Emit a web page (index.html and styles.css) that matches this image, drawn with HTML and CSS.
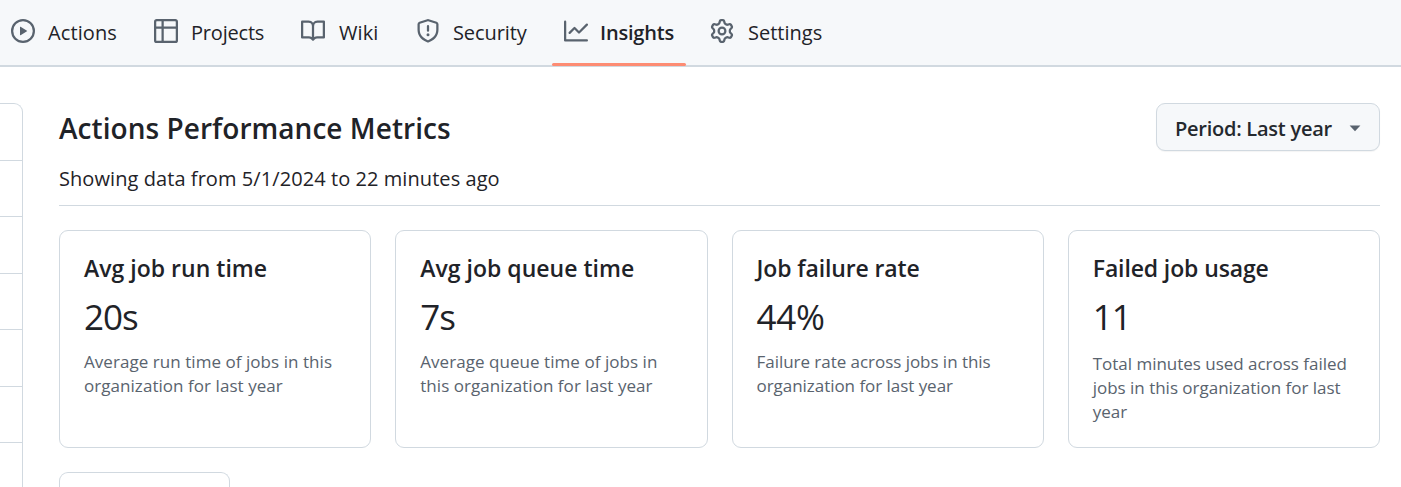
FILE: index.html
```html
<!DOCTYPE html>
<html lang="en">
<head>
<meta charset="utf-8">
<title>Actions Performance Metrics</title>
<link rel="stylesheet" href="styles.css">
</head>
<body>
<nav class="tabs">
  <a class="tab tab-actions"><svg class="icon" viewBox="0 0 16 16"><path d="M8 0a8 8 0 1 1 0 16A8 8 0 0 1 8 0ZM1.5 8a6.5 6.5 0 1 0 13 0 6.5 6.5 0 0 0-13 0Zm4.879-2.773 4.264 2.559a.25.25 0 0 1 0 .428l-4.264 2.559A.25.25 0 0 1 6 10.559V5.442a.25.25 0 0 1 .379-.215Z"/></svg><span>Actions</span></a>
  <a class="tab tab-projects"><svg class="icon" viewBox="0 0 16 16"><path d="M0 1.75C0 .784.784 0 1.75 0h12.5C15.216 0 16 .784 16 1.75v12.5A1.75 1.75 0 0 1 14.25 16H1.75A1.75 1.75 0 0 1 0 14.25ZM6.5 6.5v8h7.75a.25.25 0 0 0 .25-.25V6.5Zm8-1.5V1.75a.25.25 0 0 0-.25-.25H6.5V5Zm-13 1.5v7.75c0 .138.112.25.25.25H5v-8ZM5 5V1.5H1.75a.25.25 0 0 0-.25.25V5Z"/></svg><span>Projects</span></a>
  <a class="tab tab-wiki"><svg class="icon" viewBox="0 0 16 16"><path d="M0 1.75A.75.75 0 0 1 .75 1h4.253c1.227 0 2.317.59 3 1.501A3.743 3.743 0 0 1 11.006 1h4.245a.75.75 0 0 1 .75.75v10.5a.75.75 0 0 1-.75.75h-4.507a2.25 2.25 0 0 0-1.591.659l-.622.621a.75.75 0 0 1-1.06 0l-.622-.621A2.25 2.25 0 0 0 5.258 13H.75a.75.75 0 0 1-.75-.75Zm7.251 10.324.004-5.073-.002-2.253A2.25 2.25 0 0 0 5.003 2.5H1.5v9h3.757a3.75 3.75 0 0 1 1.994.574ZM8.755 4.75l-.004 7.322a3.752 3.752 0 0 1 1.992-.572H14.5v-9h-3.495a2.25 2.25 0 0 0-2.25 2.25Z"/></svg><span>Wiki</span></a>
  <a class="tab tab-security"><svg class="icon" viewBox="0 0 16 16"><path d="M7.467.133a1.748 1.748 0 0 1 1.066 0l5.25 1.68A1.75 1.75 0 0 1 15 3.48V7c0 1.566-.32 3.182-1.303 4.682-.983 1.498-2.585 2.813-5.032 3.855a1.697 1.697 0 0 1-1.33 0c-2.447-1.042-4.049-2.357-5.032-3.855C1.32 10.182 1 8.566 1 7V3.48a1.755 1.755 0 0 1 1.217-1.667Zm.61 1.429a.25.25 0 0 0-.153 0l-5.25 1.68a.25.25 0 0 0-.174.238V7c0 1.358.275 2.666 1.057 3.86.784 1.194 2.121 2.34 4.366 3.297a.196.196 0 0 0 .154 0c2.245-.956 3.582-2.104 4.366-3.298C13.225 9.666 13.5 8.36 13.5 7V3.48a.251.251 0 0 0-.174-.237l-5.25-1.68ZM8.75 4.75v3a.75.75 0 0 1-1.5 0v-3a.75.75 0 0 1 1.5 0ZM9 10.5a1 1 0 1 1-2 0 1 1 0 0 1 2 0Z"/></svg><span>Security</span></a>
  <a class="tab tab-insights"><svg class="icon" viewBox="0 0 16 16"><path d="M1.5 1.75V13.5h13.75a.75.75 0 0 1 0 1.5H.75a.75.75 0 0 1-.75-.75V1.75a.75.75 0 0 1 1.5 0Zm14.28 2.53-5.25 5.25a.75.75 0 0 1-1.06 0L7 7.06 4.28 9.78a.751.751 0 0 1-1.042-.018.751.751 0 0 1-.018-1.042l3.25-3.25a.75.75 0 0 1 1.06 0L10 7.94l4.72-4.72a.751.751 0 0 1 1.042.018.751.751 0 0 1 .018 1.042Z"/></svg><span>Insights</span></a>
  <a class="tab tab-settings"><svg class="icon" viewBox="0 0 16 16"><path d="M8 0a8.2 8.2 0 0 1 .701.031C9.444.095 9.99.645 10.16 1.29l.288 1.107c.018.066.079.158.212.224.231.114.454.243.668.386.123.082.233.09.299.071l1.103-.303c.644-.176 1.392.021 1.82.63.27.385.506.792.704 1.218.315.675.111 1.422-.364 1.891l-.814.806c-.049.048-.098.147-.088.294.016.257.016.515 0 .772-.01.147.038.246.088.294l.814.806c.475.469.679 1.216.364 1.891a7.977 7.977 0 0 1-.704 1.217c-.428.61-1.176.807-1.82.63l-1.102-.302c-.067-.019-.177-.011-.3.071a5.909 5.909 0 0 1-.668.386c-.133.066-.194.158-.211.224l-.29 1.106c-.168.646-.715 1.196-1.458 1.26a8.006 8.006 0 0 1-1.402 0c-.743-.064-1.289-.614-1.458-1.26l-.289-1.106c-.018-.066-.079-.158-.212-.224a5.738 5.738 0 0 1-.668-.386c-.123-.082-.233-.09-.299-.071l-1.103.303c-.644.176-1.392-.021-1.82-.63a8.12 8.12 0 0 1-.704-1.218c-.315-.675-.111-1.422.363-1.891l.815-.806c.05-.048.098-.147.088-.294a6.214 6.214 0 0 1 0-.772c.01-.147-.038-.246-.088-.294l-.815-.806C.635 6.045.431 5.298.746 4.623a7.92 7.92 0 0 1 .704-1.217c.428-.61 1.176-.807 1.82-.63l1.102.302c.067.019.177.011.3-.071.214-.143.437-.272.668-.386.133-.066.194-.158.211-.224l.29-1.106C6.009.645 6.556.095 7.299.03 7.53.01 7.764 0 8 0Zm-.571 1.525c-.036.003-.108.036-.137.146l-.289 1.105c-.147.561-.549.967-.998 1.189-.173.086-.34.183-.5.29-.417.278-.97.423-1.529.27l-1.103-.303c-.109-.03-.175.016-.195.045-.22.312-.412.644-.573.99-.014.031-.021.11.059.19l.815.806c.411.406.562.957.53 1.456a4.709 4.709 0 0 0 0 .582c.032.499-.119 1.05-.53 1.456l-.815.806c-.081.08-.073.159-.059.19.162.346.353.677.573.989.02.03.085.076.195.046l1.102-.303c.56-.153 1.113-.008 1.53.27.161.107.328.204.501.29.447.222.85.629.997 1.189l.289 1.105c.029.109.101.143.137.146a6.6 6.6 0 0 0 1.142 0c.036-.003.108-.036.137-.146l.289-1.105c.147-.561.549-.967.998-1.189.173-.086.34-.183.5-.29.417-.278.97-.423 1.529-.27l1.103.303c.109.029.175-.016.195-.045.22-.313.411-.644.573-.99.014-.031.021-.11-.059-.19l-.815-.806c-.411-.406-.562-.957-.53-1.456a4.709 4.709 0 0 0 0-.582c-.032-.499.119-1.05.53-1.456l.815-.806c.081-.08.073-.159.059-.19a6.464 6.464 0 0 0-.573-.989c-.02-.03-.085-.076-.195-.046l-1.102.303c-.56.153-1.113.008-1.53-.27a4.44 4.44 0 0 0-.501-.29c-.447-.222-.85-.629-.997-1.189l-.289-1.105c-.029-.11-.101-.143-.137-.146a6.6 6.6 0 0 0-1.142 0ZM11 8a3 3 0 1 1-6 0 3 3 0 0 1 6 0ZM9.5 8a1.5 1.5 0 1 0-3.001.001A1.5 1.5 0 0 0 9.5 8Z"/></svg><span>Settings</span></a>
</nav>
<div class="layout">
  <aside class="menu">
    <div class="menu-row"></div><div class="menu-row"></div><div class="menu-row"></div><div class="menu-row"></div><div class="menu-row"></div><div class="menu-row"></div>
  </aside>
  <main class="main">
    <header class="head">
      <div>
        <h1 class="heading">Actions Performance Metrics</h1>
        <p class="range">Showing data from 5/1/2024 to 22 minutes ago</p>
      </div>
      <button class="period"><span>Period: Last year</span><svg class="caret" viewBox="0 0 12 7"><path d="M.6.5h10.8L6 6.3Z"/></svg></button>
    </header>
    <section class="cards">
      <article class="card">
        <h2 class="card-title">Avg job run time</h2>
        <p class="value">20s</p>
        <p class="desc">Average run time of jobs in this<br>organization for last year</p>
      </article>
      <article class="card">
        <h2 class="card-title">Avg job queue time</h2>
        <p class="value">7s</p>
        <p class="desc">Average queue time of jobs in<br>this organization for last year</p>
      </article>
      <article class="card card-failure">
        <h2 class="card-title">Job failure rate</h2>
        <p class="value value-percent">44%</p>
        <p class="desc">Failure rate across jobs in this<br>organization for last year</p>
      </article>
      <article class="card card-usage">
        <h2 class="card-title">Failed job usage</h2>
        <p class="value">11</p>
        <p class="desc">Total minutes used across failed<br>jobs in this organization for last<br>year</p>
      </article>
    </section>
    <div class="card-next"></div>
  </main>
</div>
</body>
</html>
```
FILE: styles.css
```css
* { box-sizing: border-box; }
body {
  margin: 0;
  height: 487px;
  overflow: hidden;
  background: #fff;
  color: #1f2328;
  font-family: "Open Sans", "Noto Sans", sans-serif;
  font-size: 20px;
}
h1, h2, p { margin: 0; white-space: nowrap; }

.tabs {
  display: grid;
  grid-template-columns: 143px 147px 115px 148px 146px 150px;
  height: 67px;
  padding-left: 11px;
  background: #f6f8fa;
  border-bottom: 2px solid #d1d9e0;
}
.tab {
  position: relative;
  display: flex;
  align-items: center;
  gap: 13px;
  height: 62px;
  letter-spacing: 0;
}
.tab span { line-height: 28px; padding-top: 3px; }
.icon { width: 24px; height: 24px; fill: #59636e; flex: none; }
.tab-actions { letter-spacing: 0.1px; }
.tab-projects { letter-spacing: -0.2px; }
.tab-wiki { gap: 14px; letter-spacing: 0.1px; }
.tab-security { letter-spacing: -0.1px; }
.tab-insights { gap: 12px; font-weight: 600; letter-spacing: -0.2px; }
.tab-settings { gap: 14px; }
.tab-insights::after {
  content: "";
  position: absolute;
  left: -12px;
  bottom: -4px;
  width: 134px;
  height: 3px;
  border-radius: 2px;
  background: #fd8c73;
}

.layout { display: flex; gap: 36px; height: 420px; padding-top: 36px; }
.menu {
  width: 23px;
  height: 384px;
  flex: none;
  border: 1px solid #d1d9e0;
  border-left: 0;
  border-bottom: 0;
  border-radius: 0 9px 0 0;
}
.menu-row { height: 56.5px; border-bottom: 1px solid #d1d9e0; }
.main { width: 1321px; }
.head {
  display: flex;
  justify-content: space-between;
  align-items: flex-start;
  height: 103px;
  border-bottom: 1px solid #d1d9e0;
}
.heading { font-size: 28px; line-height: 40px; font-weight: 600; letter-spacing: 0.05px; padding-top: 5px; }
.range { line-height: 30px; padding-top: 16px; letter-spacing: 0.07px; }
.period {
  display: flex;
  align-items: center;
  justify-content: space-between;
  width: 224px;
  height: 48px;
  padding: 2px 18px 0;
  border: 1px solid #d1d9e0;
  border-radius: 9px;
  background: #f6f8fa;
  box-shadow: 0 1px 1px rgba(31, 35, 40, 0.05);
  color: #25292e;
  font: 600 20px "Open Sans", "Noto Sans", sans-serif;
  letter-spacing: -0.25px;
  white-space: nowrap;
}
.caret { width: 12px; height: 7px; fill: #59636e; }

.cards { display: grid; grid-template-columns: repeat(4, 1fr); gap: 24px; padding-top: 24px; }
.card { height: 218px; padding: 21px 24px; border: 1px solid #d1d9e0; border-radius: 9px; }
.card-title { font-size: 23px; line-height: 32px; font-weight: 600; letter-spacing: 0.02px; }
.value { font-size: 35px; line-height: 48px; padding-top: 9px; letter-spacing: -1px; }
.value-percent { letter-spacing: -0.2px; }
.desc { font-size: 17px; line-height: 24px; padding-top: 9px; color: #59636e; letter-spacing: 0.05px; }
.card-failure .card-title, .card-usage .card-title { letter-spacing: -0.12px; }
.card-failure .desc { letter-spacing: -0.04px; }
.card-usage .desc { letter-spacing: -0.02px; padding-top: 11px; }
.card-next { width: 171px; height: 15px; margin-top: 24px; border: 1px solid #d1d9e0; border-bottom: 0; border-radius: 9px 9px 0 0; }
```
